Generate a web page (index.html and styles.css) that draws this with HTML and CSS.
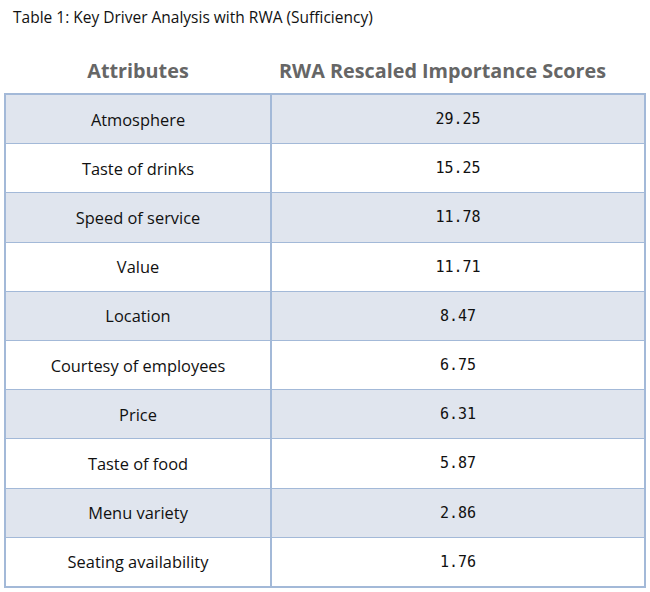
FILE: index.html
```html
<!DOCTYPE html>
<html>
<head>
<meta charset="utf-8">
<link rel="stylesheet" href="styles.css">
</head>
<body>
<div class="caption">Table 1: Key Driver Analysis with RWA (Sufficiency)</div>
<table class="kda">
  <thead>
    <tr><th class="c1">Attributes</th><th class="c2">RWA Rescaled Importance Scores</th></tr>
  </thead>
  <tbody>
    <tr class="odd"><td class="c1">Atmosphere</td><td class="num">29.25</td></tr>
    <tr><td class="c1">Taste of drinks</td><td class="num">15.25</td></tr>
    <tr class="odd"><td class="c1">Speed of service</td><td class="num">11.78</td></tr>
    <tr><td class="c1">Value</td><td class="num">11.71</td></tr>
    <tr class="odd"><td class="c1">Location</td><td class="num">8.47</td></tr>
    <tr><td class="c1">Courtesy of employees</td><td class="num">6.75</td></tr>
    <tr class="odd"><td class="c1">Price</td><td class="num">6.31</td></tr>
    <tr><td class="c1">Taste of food</td><td class="num">5.87</td></tr>
    <tr class="odd"><td class="c1">Menu variety</td><td class="num">2.86</td></tr>
    <tr><td class="c1">Seating availability</td><td class="num">1.76</td></tr>
  </tbody>
</table>
</body>
</html>
```

FILE: styles.css
```css
html, body {
  margin: 0;
  padding: 0;
  background: #ffffff;
}
body {
  font-family: "Open Sans", "DejaVu Sans", sans-serif;
  color: #111;
}
.caption {
  font-size: 15.5px;
  line-height: 20px;
  padding: 7px 0 0 13px;
  height: 29px;
}
.kda {
  margin-left: 4px;
  width: 642px;
  border-collapse: collapse;
  table-layout: fixed;
}
.kda th {
  font-size: 19.8px;
  font-weight: bold;
  color: #666666;
  height: 58px;
  padding: 0 0 9px 0;
  box-sizing: border-box;
  vertical-align: bottom;
}
.kda th.c1 { width: 266px; }
.kda th.c2 { text-align: left; padding-left: 8px; }
.kda tbody {
  border: 2px solid #a3b9d8;
}
.kda td {
  height: 48.2px;
  padding: 0;
  text-align: center;
  font-size: 16.4px;
  border-top: 1px solid #a3b9d8;
  border-bottom: 1px solid #a3b9d8;
}
.kda td.c1 {
  border-right: 2px solid #a3b9d8;
}
.kda tr.odd td {
  background: #e0e5ee;
}
.kda td.num {
  font-family: "DejaVu Sans Mono", monospace;
  font-size: 15px;
}
```
